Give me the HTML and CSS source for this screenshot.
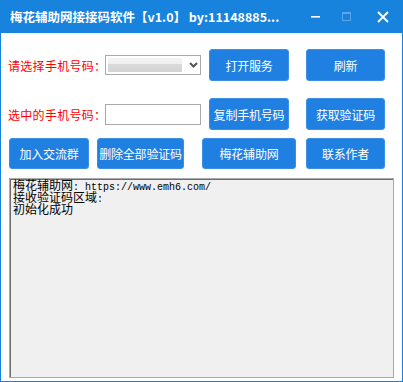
FILE: index.html
```html
<!DOCTYPE html>
<html>
<head>
    <title>梅花辅助网接接码软件</title>
    <meta charset="UTF-8">
    <link rel="stylesheet" href="styles.css">
</head>
<body>
<div class="window">
    <div class="titlebar">
        <div class="title">梅花辅助网接接码软件【v1.0】 by:11148885...</div>
        <div class="ctl ctl-min">
            <svg width="10" height="10" viewBox="0 0 10 10"><rect x="0" y="4" width="9" height="1.6" fill="#fff"/></svg>
        </div>
        <div class="ctl ctl-max">
            <svg width="10" height="10" viewBox="0 0 10 10"><rect x="0.5" y="0.5" width="8" height="8" fill="none" stroke="#5aa6ea" stroke-width="1"/><rect x="0.5" y="0.5" width="8" height="1.5" fill="#5aa6ea"/></svg>
        </div>
        <div class="ctl ctl-close">
            <svg width="12" height="12" viewBox="0 0 12 12"><path d="M1 1 L11 11 M11 1 L1 11" stroke="#fff" stroke-width="1.8"/></svg>
        </div>
    </div>

    <div class="row row-1">
        <span class="label">请选择手机号码：</span>
        <div class="select">
            <div class="select-face"></div>
            <svg class="chevron" width="9" height="6" viewBox="0 0 9 6"><path d="M1 1 L4.5 4.5 L8 1" fill="none" stroke="#555" stroke-width="2"/></svg>
        </div>
        <button class="btn w80 ml8">打开服务</button>
        <button class="btn w79 ml17">刷新</button>
    </div>

    <div class="row row-2">
        <span class="label">选中的手机号码：</span>
        <div class="input"></div>
        <button class="btn w80 ml8">复制手机号码</button>
        <button class="btn w79 ml17">获取验证码</button>
    </div>

    <div class="row row-3">
        <button class="btn w80">加入交流群</button>
        <button class="btn w87 ml8">删除全部验证码</button>
        <button class="btn w94 ml18">梅花辅助网</button>
        <button class="btn w79 ml10">联系作者</button>
    </div>

    <div class="log">
        <div class="log-line">梅花辅助网<span class="mono">: https://www.emh6.com/</span></div>
        <div class="log-line">接收验证码区域<span class="mono">:</span></div>
        <div class="log-line">初始化成功</div>
    </div>
</div>
</body>
</html>
```

FILE: styles.css
```css
html, body {
    margin: 0;
    padding: 0;
    background: #fff;
}

.window {
    width: 403px;
    height: 382px;
    box-sizing: border-box;
    border: 1px solid #1783dc;
    border-top: none;
    background: #fff;
    font-family: "Noto Sans CJK SC", sans-serif;
}

.titlebar {
    height: 33px;
    background: #1783dc;
    display: flex;
    align-items: center;
    margin: 0 -1px;
}

.title {
    flex: 1;
    padding-left: 10px;
    color: #fff;
    font-weight: bold;
    font-size: 12.5px;
    white-space: nowrap;
}

.ctl {
    height: 33px;
    display: flex;
    align-items: center;
    justify-content: center;
}

.ctl-min { width: 30px; }
.ctl-max { width: 32px; }
.ctl-close { width: 40px; }

.row {
    display: flex;
    align-items: center;
    height: 32px;
    padding-left: 7px;
}

.row-1 { margin-top: 16px; }
.row-2 { margin-top: 17px; }
.row-3 { margin-top: 8px; height: 31px; padding-left: 8px; }

.label {
    width: 97px;
    color: #f00;
    font-size: 12px;
    white-space: nowrap;
    letter-spacing: 0.3px;
}

.select {
    width: 96px;
    height: 20px;
    box-sizing: border-box;
    border: 1px solid #a9a9a9;
    background: #fff;
    display: flex;
    align-items: center;
    padding-left: 2px;
}

.select-face {
    width: 74px;
    height: 14px;
    background: linear-gradient(#f3f3f3, #f0f0f0 40%, #dadada 45%, #d4d4d4);
}

.chevron {
    margin-left: 7px;
}

.input {
    width: 96px;
    height: 21px;
    box-sizing: border-box;
    border: 1px solid #a9a9a9;
    background: #fff;
}

.btn {
    height: 100%;
    border: 1px solid #3d8fe6;
    border-radius: 3px;
    background: #1f80e2;
    color: #fff;
    font-family: "Noto Sans CJK SC", sans-serif;
    font-size: 12px;
    padding: 0;
    white-space: nowrap;
    letter-spacing: -0.2px;
}

.w79 { width: 79px; }
.w80 { width: 80px; }
.w87 { width: 87px; }
.w94 { width: 94px; }

.ml8 { margin-left: 8px; }
.ml10 { margin-left: 10px; }
.ml17 { margin-left: 17px; }
.ml18 { margin-left: 18px; }

.log {
    margin: 9px 0 0 8px;
    width: 385px;
    height: 200px;
    box-sizing: border-box;
    border: 1px solid #a9a9a9;
    box-shadow: inset 1px 1px 0 #6d6d6d;
    background: #f0f0f0;
    padding: 0 0 0 3px;
    color: #000;
}

.log-line {
    height: 12px;
    font-size: 12px;
    line-height: 12px;
    white-space: nowrap;
}

.mono {
    font-family: "Liberation Mono", monospace;
    font-size: 10px;
}
```
